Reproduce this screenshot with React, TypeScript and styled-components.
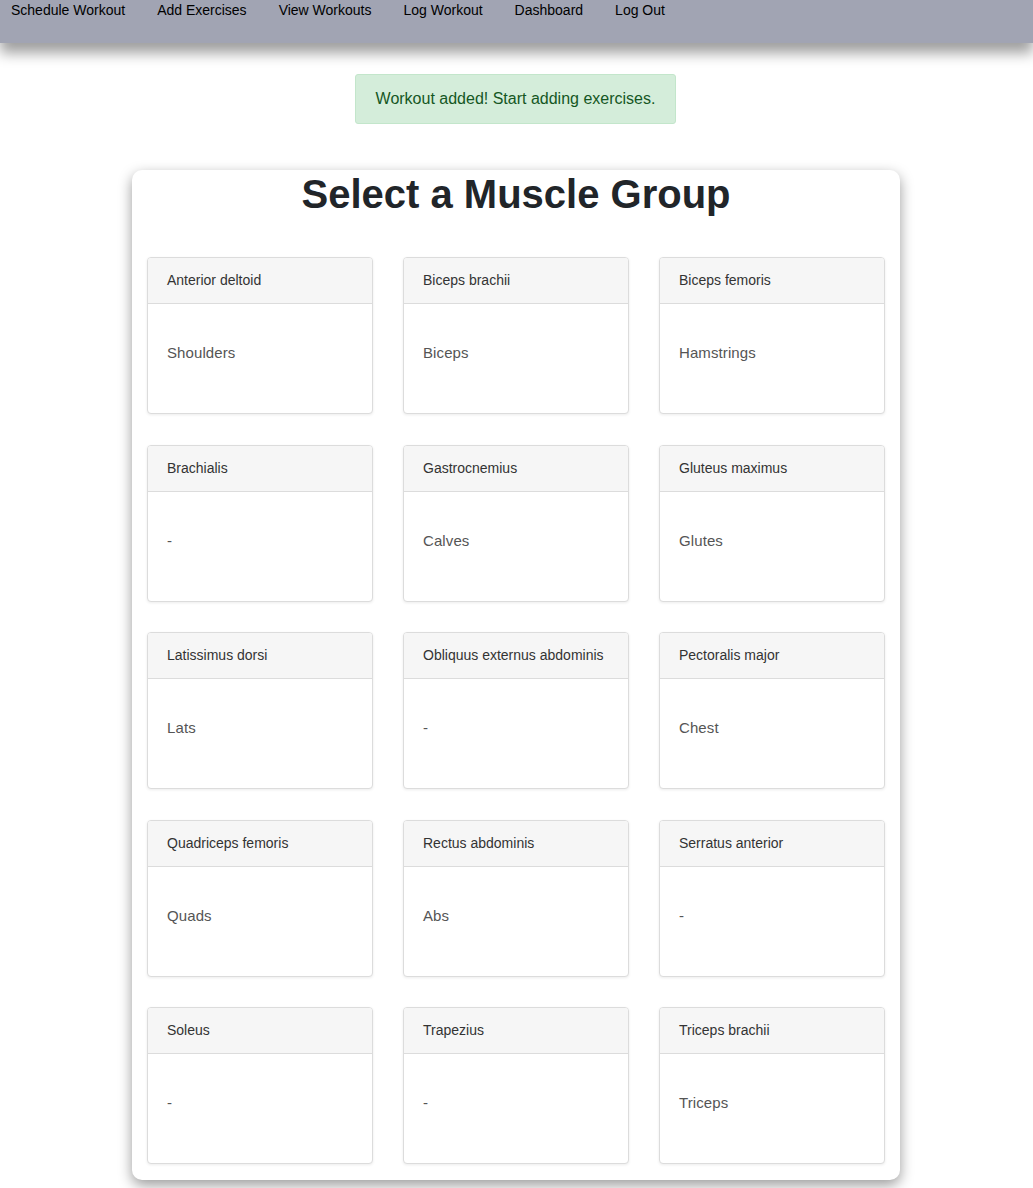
import React from 'react'
import styled, { createGlobalStyle } from 'styled-components'

const GlobalStyle = createGlobalStyle`
  * {
    box-sizing: border-box;
  }
  body {
    margin: 0;
    background: #fff;
    font-family: 'Liberation Sans', Arial, sans-serif;
    color: #212529;
  }
`

const S = {
  Nav: styled.nav`
    height: 43px;
    background: #a1a4b3;
    box-shadow: 0 10px 14px rgba(0, 0, 0, 0.38);
    display: flex;
    gap: 32px;
    padding: 2px 0 0 11px;
    position: relative;
    z-index: 1;
  `,
  NavLink: styled.a`
    font-size: 14px;
    line-height: 16px;
    color: #000;
    text-decoration: none;
    cursor: pointer;
  `,
  Main: styled.main`
    display: flex;
    flex-direction: column;
    align-items: center;
    padding: 31px 0 8px;
  `,
  Alert: styled.div`
    padding: 12px 20px;
    font-size: 16px;
    line-height: 24px;
    color: #155724;
    background: #d4edda;
    border: 1px solid #c3e6cb;
    border-radius: 3px;
    margin-right: 2px;
  `,
  Panel: styled.section`
    margin: 46px 1px 0 0;
    width: 768px;
    background: #fff;
    border-radius: 10px;
    box-shadow: 0 5px 14px rgba(0, 0, 0, 0.4);
    padding: 4px 15px 16px;
  `,
  Title: styled.h1`
    margin: 0 0 43px;
    font-size: 40px;
    line-height: 40px;
    font-weight: 700;
    text-align: center;
    color: #212529;
  `,
  Grid: styled.div`
    display: grid;
    grid-template-columns: repeat(3, 226px);
    column-gap: 30px;
    row-gap: 30.5px;
  `,
  Card: styled.div`
    border: 1px solid #dcdcdc;
    border-radius: 4px;
    background: #fff;
    box-shadow: 0 1px 3px rgba(0, 0, 0, 0.08);
    overflow: hidden;
    cursor: pointer;
  `,
  CardHeader: styled.div`
    padding: 12px 19px;
    font-size: 14px;
    line-height: 21px;
    color: #333;
    background: #f6f6f6;
    border-bottom: 1px solid #dcdcdc;
  `,
  CardBody: styled.div`
    height: 109px;
    padding: 37px 19px 0;
    font-size: 15px;
    line-height: 24px;
    color: #555;
    letter-spacing: 0.1px;
  `
}

const muscles: [string, string][] = [
  ['Anterior deltoid', 'Shoulders'],
  ['Biceps brachii', 'Biceps'],
  ['Biceps femoris', 'Hamstrings'],
  ['Brachialis', '-'],
  ['Gastrocnemius', 'Calves'],
  ['Gluteus maximus', 'Glutes'],
  ['Latissimus dorsi', 'Lats'],
  ['Obliquus externus abdominis', '-'],
  ['Pectoralis major', 'Chest'],
  ['Quadriceps femoris', 'Quads'],
  ['Rectus abdominis', 'Abs'],
  ['Serratus anterior', '-'],
  ['Soleus', '-'],
  ['Trapezius', '-'],
  ['Triceps brachii', 'Triceps']
]

const links = ['Schedule Workout', 'Add Exercises', 'View Workouts', 'Log Workout', 'Dashboard', 'Log Out']

export default function App() {
  return (
    <>
      <GlobalStyle />
      <S.Nav>
        {links.map((l) => (
          <S.NavLink key={l}>{l}</S.NavLink>
        ))}
      </S.Nav>
      <S.Main>
        <S.Alert>Workout added! Start adding exercises.</S.Alert>
        <S.Panel>
          <S.Title>Select a Muscle Group</S.Title>
          <S.Grid>
            {muscles.map(([name, common]) => (
              <S.Card key={name}>
                <S.CardHeader>{name}</S.CardHeader>
                <S.CardBody>{common}</S.CardBody>
              </S.Card>
            ))}
          </S.Grid>
        </S.Panel>
      </S.Main>
    </>
  )
}
